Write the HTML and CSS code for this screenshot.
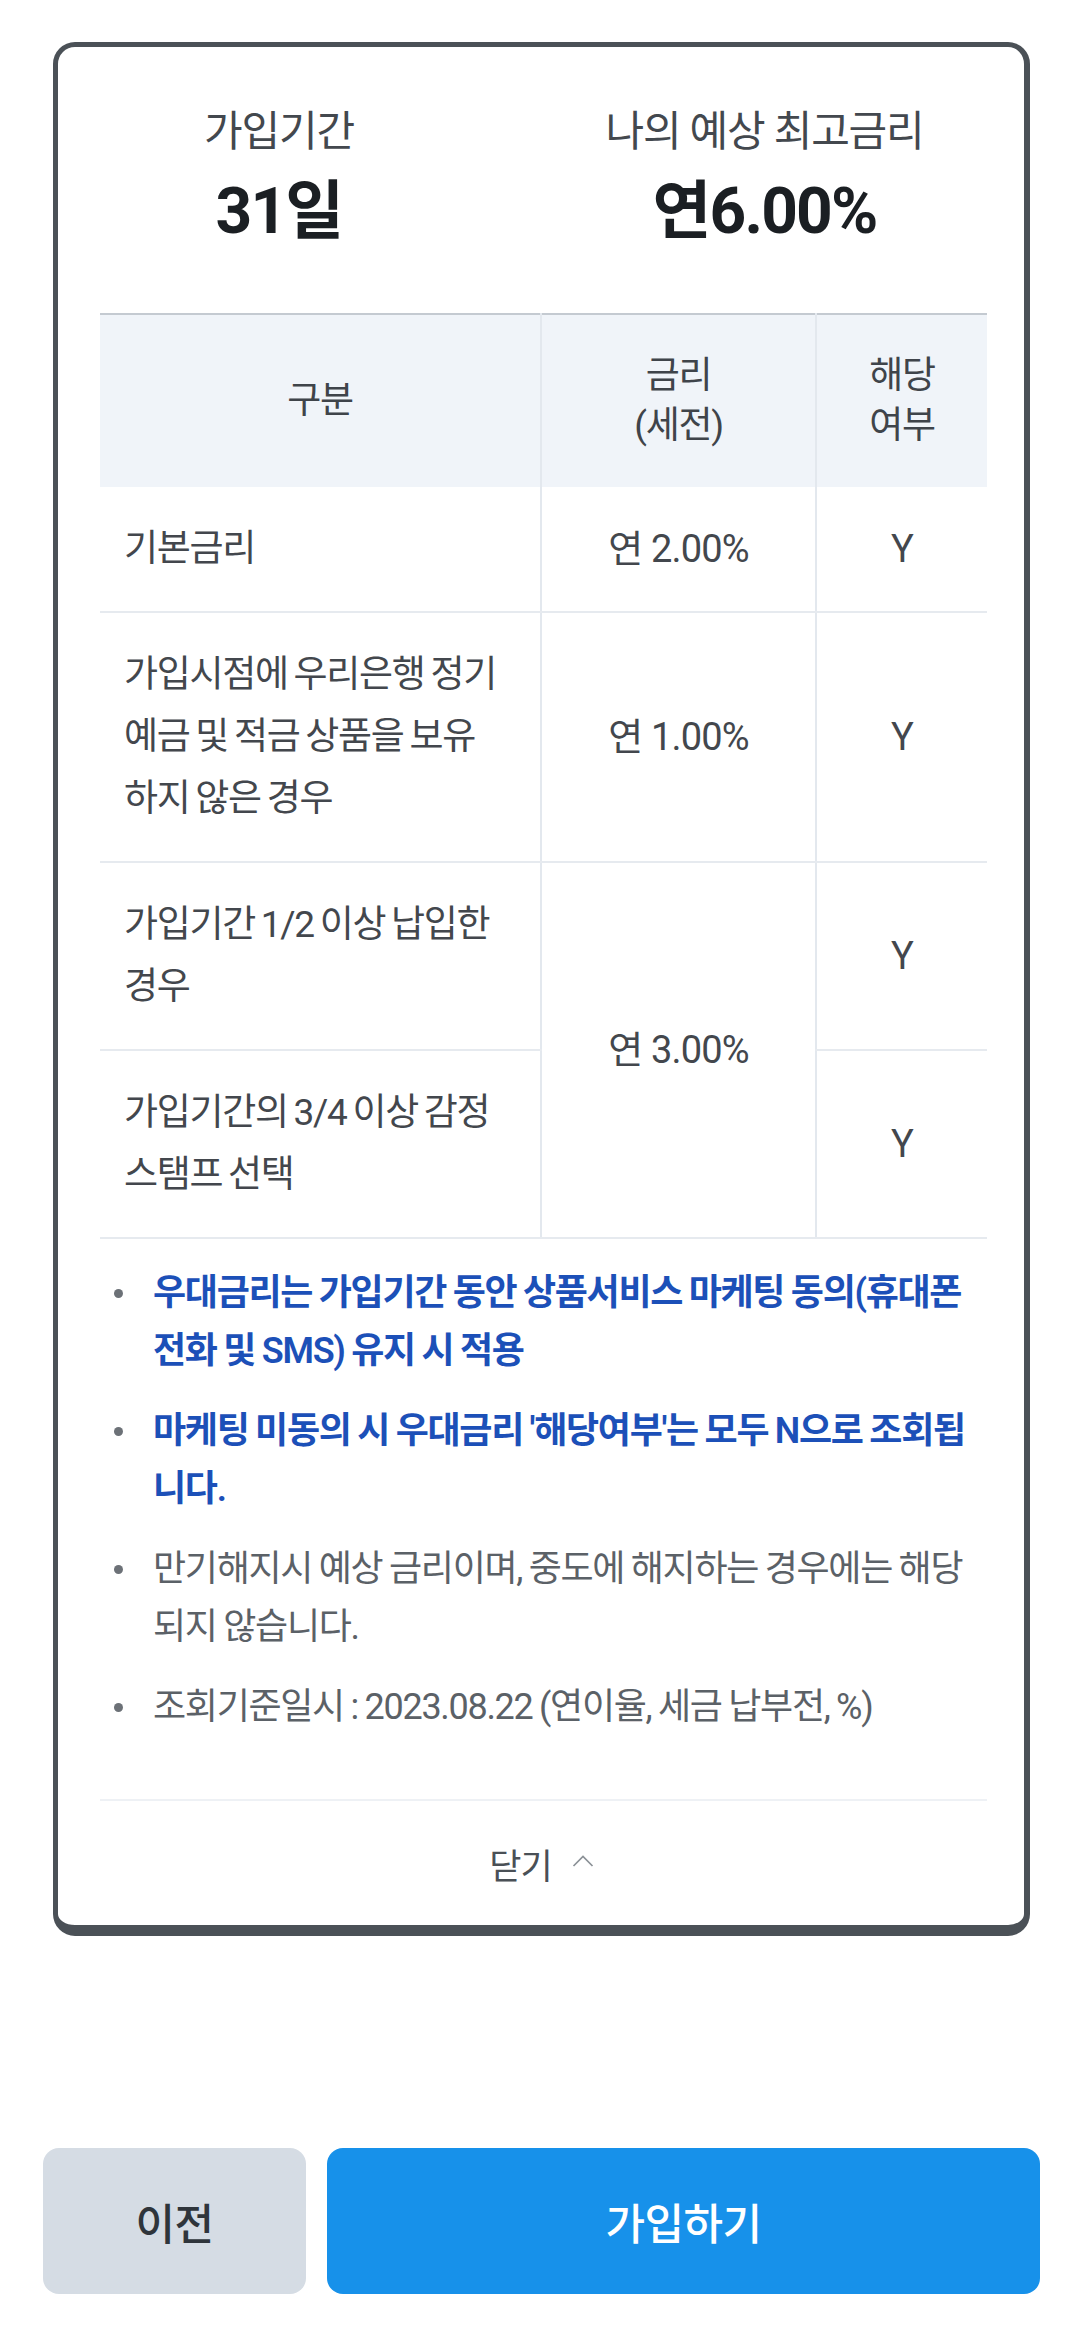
FILE: index.html
```html
<!DOCTYPE html>
<html lang="ko">
<head>
<meta charset="utf-8">
<title>우대금리 안내</title>
<link rel="stylesheet" href="styles.css">
</head>
<body>
<main class="page">
  <section class="card">
    <div class="summary">
      <div class="summary-item summary-left">
        <div class="summary-label">가입기간</div>
        <div class="summary-value">31일</div>
      </div>
      <div class="summary-item summary-right">
        <div class="summary-label">나의 예상 최고금리</div>
        <div class="summary-value">연6.00%</div>
      </div>
    </div>

    <table class="rate-table">
      <colgroup><col class="col-name"><col class="col-rate"><col class="col-yn"></colgroup>
      <thead>
        <tr><th>구분</th><th class="th-rate">금리<br>(세전)</th><th class="th-yn">해당<br>여부</th></tr>
      </thead>
      <tbody>
        <tr><td class="name">기본금리</td><td class="rate">연 2.00%</td><td class="yn">Y</td></tr>
        <tr><td class="name">가입시점에 우리은행 정기<br>예금 및 적금 상품을 보유<br>하지 않은 경우</td><td class="rate">연 1.00%</td><td class="yn">Y</td></tr>
        <tr><td class="name">가입기간 1/2 이상 납입한<br>경우</td><td class="rate" rowspan="2">연 3.00%</td><td class="yn">Y</td></tr>
        <tr><td class="name">가입기간의 3/4 이상 감정<br>스탬프 선택</td><td class="yn">Y</td></tr>
      </tbody>
    </table>

    <ul class="notes">
      <li class="note note-strong">우대금리는 가입기간 동안 상품서비스 마케팅 동의(휴대폰<br>전화 및 SMS) 유지 시 적용</li>
      <li class="note note-strong">마케팅 미동의 시 우대금리 '해당여부'는 모두 N으로 조회됩<br>니다.</li>
      <li class="note">만기해지시 예상 금리이며, 중도에 해지하는 경우에는 해당<br>되지 않습니다.</li>
      <li class="note">조회기준일시 : 2023.08.22 (연이율, 세금 납부전, %)</li>
    </ul>

    <div class="close-row">
      <button class="close-btn" type="button">닫기
        <svg class="chev" width="22" height="12" viewBox="0 0 22 12" aria-hidden="true"><polyline points="1.5,11 11,1.5 20.5,11" fill="none" stroke="#8b9197" stroke-width="1.7"/></svg>
      </button>
    </div>
  </section>

  <div class="actions">
    <button class="btn btn-prev" type="button">이전</button>
    <button class="btn btn-join" type="button">가입하기</button>
  </div>
</main>
</body>
</html>
```

FILE: styles.css
```css
html, body {
  margin: 0;
  padding: 0;
  background: #ffffff;
}

body {
  font-family: "Roboto", "Noto Sans CJK KR", sans-serif;
  color: #45494f;
}

.page {
  width: 1080px;
}

.card {
  margin: 42px 50px 0 53px;
  border-style: solid;
  border-color: #4b5157;
  border-width: 5px 6px 11px 5px;
  border-radius: 22px;
  padding: 0 37px 0 42px;
  background: #ffffff;
}

/* summary */
.summary {
  display: grid;
  grid-template-columns: 358px 1fr;
  padding-top: 61px;
}

.summary-item {
  text-align: center;
}

.summary-right {
  padding-left: 84px;
}

.summary-label {
  font-size: 42px;
  line-height: 48px;
  color: #43484e;
  letter-spacing: -1.2px;
}

.summary-value {
  margin-top: 21px;
  font-size: 64px;
  line-height: 70px;
  font-weight: 700;
  color: #1b1f23;
  letter-spacing: -1.8px;
}

/* table */
.rate-table {
  margin-top: 66px;
  width: 887px;
  table-layout: fixed;
  border-collapse: collapse;
  border-top: 2px solid #c4cad1;
  font-size: 37px;
}

.col-name { width: 441px; }
.col-rate { width: 275px; }
.col-yn { width: 171px; }

.rate-table th {
  background: #f0f4f9;
  font-weight: 400;
  color: #3f444a;
  line-height: 50px;
  padding: 36px 0;
  text-align: center;
  letter-spacing: -1.3px;
}

.rate-table .th-rate,
.rate-table .th-yn {
  border-left: 2px solid #e3e8ee;
}

.rate-table td {
  line-height: 62px;
  padding: 31px 0;
  border-bottom: 2px solid #e6eaef;
  color: #43474d;
  vertical-align: middle;
}

.rate-table td.name {
  padding-left: 24px;
  padding-right: 4px;
  font-size: 37px;
  white-space: nowrap;
  letter-spacing: -1.3px;
  word-spacing: -2px;
}

.rate-table td.rate,
.rate-table td.yn {
  text-align: center;
  border-left: 2px solid #e3e8ee;
  font-size: 38px;
  letter-spacing: -0.8px;
}

/* notes */
.notes {
  list-style: none;
  margin: 0;
  padding: 25px 0 63px 0;
}

.note {
  position: relative;
  padding-left: 53px;
  font-size: 36px;
  line-height: 58px;
  color: #5b6167;
  white-space: nowrap;
  letter-spacing: -1.3px;
  word-spacing: -1px;
  margin-bottom: 22px;
}

.note:last-child {
  margin-bottom: 0;
}

.note::before {
  content: "";
  position: absolute;
  left: 14px;
  top: 25px;
  width: 9px;
  height: 9px;
  border-radius: 50%;
  background: #6c7177;
}

.note-strong {
  color: #1c50b8;
  font-weight: 600;
}

/* close */
.close-row {
  border-top: 2px solid #eef1f5;
  height: 124px;
  display: flex;
  align-items: center;
  justify-content: center;
}

.close-btn {
  display: flex;
  align-items: center;
  gap: 20px;
  background: none;
  border: 0;
  padding: 0 4px 0 0;
  font-family: "Roboto", "Noto Sans CJK KR", sans-serif;
  font-size: 35px;
  color: #4a5056;
  letter-spacing: -1px;
}

.chev {
  display: block;
  margin-top: -4px;
}

/* actions */
.actions {
  display: flex;
  gap: 21px;
  margin: 212px 40px 0 43px;
}

.btn {
  height: 146px;
  border: 0;
  border-radius: 16px;
  font-family: "Roboto", "Noto Sans CJK KR", sans-serif;
  font-size: 43px;
  font-weight: 500;
  letter-spacing: -0.5px;
}

.btn-prev {
  width: 263px;
  background: #d5dce4;
  color: #2f353b;
}

.btn-join {
  flex: 1;
  background: #1791ea;
  color: #ffffff;
}
```
